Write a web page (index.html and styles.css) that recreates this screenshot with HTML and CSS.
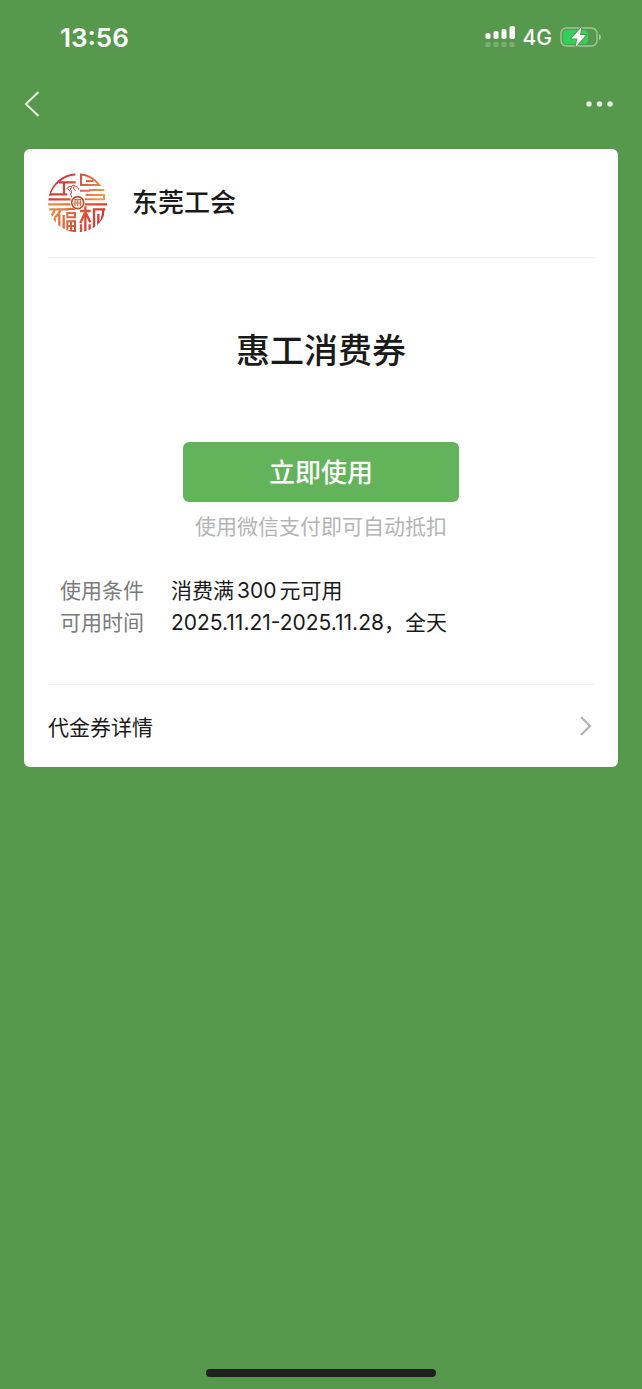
FILE: index.html
```html
<!DOCTYPE html>
<html lang="zh-CN">
<head>
    <meta charset="UTF-8">
    <meta name="viewport" content="width=device-width, initial-scale=1">
    <title>惠工消费券</title>
    <link rel="stylesheet" href="styles.css">
</head>
<body>
    <div class="status-bar">
        <span class="time">13:56</span>
        <div class="status-icons">
            <svg class="signal" width="30" height="22" viewBox="0 0 30 22" fill="#fff">
                <rect x="0.500" y="7" width="5" height="6" rx="1.800"/>
                <rect x="8.500" y="5" width="5" height="8" rx="1.800"/>
                <rect x="16.500" y="3" width="5" height="10" rx="1.800"/>
                <rect x="24.500" y="0" width="5.500" height="13" rx="1.800"/>
                <g opacity="0.22">
                    <rect x="0.500" y="16" width="5" height="5" rx="1.500"/>
                    <rect x="8.500" y="16" width="5" height="5" rx="1.500"/>
                    <rect x="16.500" y="16" width="5" height="5" rx="1.500"/>
                    <rect x="24.500" y="16" width="5" height="5" rx="1.500"/>
                </g>
            </svg>
            <span class="network">4G</span>
            <svg class="battery" width="42" height="22" viewBox="0 0 42 22">
                <rect x="1" y="2" width="36" height="18" rx="5.500" fill="none" stroke="#fff" stroke-opacity="0.45" stroke-width="1.400"/>
                <path d="M39 8 Q41 9 41 11 Q41 13 39 14Z" fill="#fff" opacity="0.5"/>
                <rect x="3" y="4" width="25" height="14" rx="3.500" fill="#30d158"/>
                <path d="M21.500 1 L11.500 12.500 H17.500 L15.500 21 L26 9 H20Z" fill="#fff" stroke="#56994c" stroke-width="2" stroke-linejoin="round" paint-order="stroke"/>
            </svg>
        </div>
    </div>

    <header class="nav">
        <button class="nav-btn" type="button" aria-label="返回">
            <svg width="16" height="28" viewBox="0 0 16 28" fill="none" stroke="#e4efe2" stroke-width="2">
                <path d="M14.500 2 L2 14 L14.500 26"/>
            </svg>
        </button>
        <button class="nav-btn" type="button" aria-label="更多">
            <svg width="28" height="8" viewBox="0 0 28 8" fill="#e4efe2">
                <circle cx="3" cy="4" r="2.700"/>
                <circle cx="13.500" cy="4" r="2.700"/>
                <circle cx="24" cy="4" r="2.700"/>
            </svg>
        </button>
    </header>

    <main class="card">
        <div class="merchant">
            <svg class="logo" width="60" height="60" viewBox="30 30 180 180">
                <defs>
                    <linearGradient id="logoTop" gradientUnits="userSpaceOnUse" x1="50" y1="35" x2="180" y2="115">
                        <stop offset="0" stop-color="#cb2a33"/>
                        <stop offset="0.550" stop-color="#dc5a3c"/>
                        <stop offset="1" stop-color="#f0984e"/>
                    </linearGradient>
                    <linearGradient id="logoBottom" gradientUnits="userSpaceOnUse" x1="50" y1="125" x2="190" y2="205">
                        <stop offset="0" stop-color="#ea8b3d"/>
                        <stop offset="0.450" stop-color="#de5a35"/>
                        <stop offset="1" stop-color="#cf3038"/>
                    </linearGradient>
                    <clipPath id="logoClip"><circle cx="119" cy="119" r="89"/></clipPath>
                </defs>
                <g clip-path="url(#logoClip)" fill="none" stroke-width="7">
                    <g stroke="url(#logoTop)">
                        <path d="M33 98 A87 87 0 0 1 112 34"/>
                        <path d="M63 58 H113 M78 58 V94 M36 94 H88 M31 109 H98"/>
                        <path d="M129 68 V34 A87 87 0 0 1 184 66 H126" stroke-width="6"/>
                        <path d="M144 54 H166 M126 83 H156 M154 81 H200 M143 96 H198 V109 H141" stroke-width="6"/>
                    </g>
                    <g stroke="url(#logoBottom)">
                        <path d="M30 124 H98 M34 139 H92 M50 139 Q48 151 40 158 M67 139 Q65 152 50 164 M50 186 V165 M64 200 V154 M77 206 V156"/>
                        <path d="M86 138 H113 M88 150 H111 V163 H88Z M88 175 H111 V204 H88Z M99 175 V206 M88 189 H111" stroke-width="6"/>
                        <path d="M139 124 H207 M126 144 H158 M142 130 V207 M140 151 L127 180 M144 151 L157 178 M129 184 V208 M155 184 V204"/>
                        <path d="M168 202 V139 H202 M181 191 V152 M196 139 Q195 168 184 184"/>
                    </g>
                </g>
                <g fill="none" stroke="#cf3a36" stroke-width="3">
                    <path d="M87 77 Q91 67 101 70 Q105 64 112 69 M112 69 Q121 71 122 80 M101 71 Q94 80 101 86 Q96 94 101 103 M91 78 L97 86 M108 70 Q104 78 113 84"/>
                </g>
                <circle cx="119" cy="119" r="22" fill="#fff"/>
                <circle cx="119" cy="119" r="18" fill="#fff" stroke="#c84c35" stroke-width="5"/>
                <path d="M111 109 V130 M119 109 V130 M127 109 V130 M109 110 H129 M107 120 H131" fill="none" stroke="#df693b" stroke-width="3.500"/>
            </svg>
            <span class="merchant-name">东莞工会</span>
        </div>

        <section class="coupon">
            <h1 class="coupon-title">惠工消费券</h1>
            <button class="use-btn" type="button">立即使用</button>
            <p class="hint">使用微信支付即可自动抵扣</p>
            <dl class="rules">
                <dt>使用条件</dt>
                <dd>消费满<span class="amount">300</span>元可用</dd>
                <dt>可用时间</dt>
                <dd>2025.11.21-2025.11.28，全天</dd>
            </dl>
        </section>

        <a class="detail" href="#">
            <span>代金券详情</span>
            <svg width="16" height="20" viewBox="0 0 16 20" fill="none" stroke="#b2b2b2" stroke-width="2.200">
                <path d="M3 1 L12 10 L3 19"/>
            </svg>
        </a>
    </main>

    <div class="home-indicator"></div>
</body>
</html>
```

FILE: styles.css
```css
:root {
    --bg-color: #56994c;
    --card-color: #fff;
    --text-color: #1a1a1a;
    --label-color: #7b7b7b;
    --hint-color: #b4b4b4;
    --line-color: #f0f0f0;
    --button-color: #62b35a;
}
* {
    box-sizing: border-box;
}
body {
    display: flex;
    flex-direction: column;
    min-height: 100vh;
    margin: 0;
    background-color: var(--bg-color);
    color: var(--text-color);
    font-family: Inter, "Noto Sans CJK SC", sans-serif;
    font-size: 21px;
}
button {
    border: none;
    font-family: inherit;
    cursor: pointer;
}
.status-bar {
    display: flex;
    justify-content: space-between;
    align-items: center;
    height: 74px;
    padding: 0 40px 0 60px;
    color: #fff;
}
.time {
    font-size: 26px;
    font-weight: 600;
}
.status-icons {
    display: flex;
    align-items: center;
    gap: 8px;
}
.network {
    font-size: 21px;
    font-weight: 500;
}
.nav {
    display: flex;
    justify-content: space-between;
    align-items: center;
    height: 60px;
    padding: 0 28px 0 24px;
}
.nav-btn {
    display: flex;
    padding: 0;
    background: none;
}
.card {
    margin: 15px 24px 0;
    padding: 0 24px;
    border-radius: 6px;
    background-color: var(--card-color);
}
.merchant {
    display: flex;
    align-items: center;
    gap: 24px;
    padding: 24px 0;
    border-bottom: 1px solid var(--line-color);
}
.merchant-name {
    font-size: 26px;
    font-weight: 500;
    line-height: 32px;
}
.coupon {
    display: flex;
    flex-direction: column;
    align-items: center;
    padding: 69px 12px 45px;
    border-bottom: 1px solid var(--line-color);
}
.coupon-title {
    margin: 0 0 67px;
    font-size: 34px;
    font-weight: 500;
    line-height: 48px;
}
.use-btn {
    width: 276px;
    height: 60px;
    padding: 0 0 4px;
    border-radius: 6px;
    background-color: var(--button-color);
    color: #fff;
    font-size: 26px;
    font-weight: 500;
}
.hint {
    margin: 9px 0 32px;
    color: var(--hint-color);
    line-height: 32px;
}
.rules {
    display: grid;
    grid-template-columns: auto 1fr;
    column-gap: 27px;
    width: 100%;
    margin: 0;
    line-height: 32px;
}
.rules dt {
    color: var(--label-color);
}
.rules dd {
    margin: 0;
}
.amount {
    margin: 0 3px;
}
.detail {
    display: flex;
    justify-content: space-between;
    align-items: center;
    height: 82px;
    color: inherit;
    text-decoration: none;
}
.home-indicator {
    width: 230px;
    height: 8px;
    margin: auto auto 12px;
    border-radius: 4px;
    background-color: #202020;
}
```
